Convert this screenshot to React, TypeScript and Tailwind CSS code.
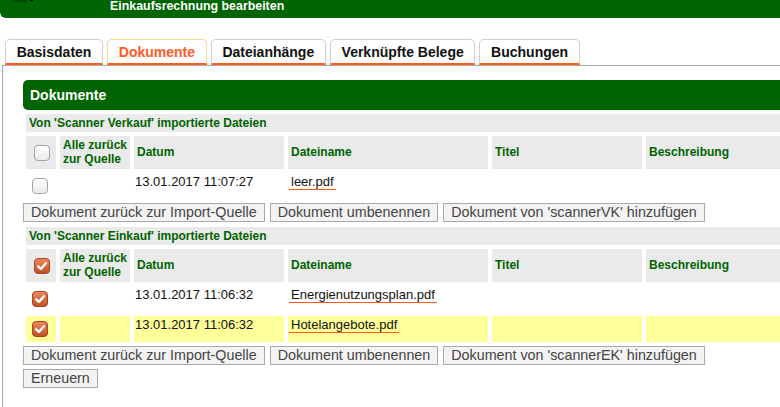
import React from 'react';

type Doc = { date: string; name: string; checked: boolean; marked?: boolean };

const tabs = ['Basisdaten', 'Dokumente', 'Dateianhänge', 'Verknüpfte Belege', 'Buchungen'];

function CheckBox({ checked }: { checked: boolean }) {
  if (checked) {
    return (
      <svg width="16" height="16" viewBox="0 0 16 16" className="block">
        <defs>
          <linearGradient id="cbOn" x1="0" y1="0" x2="0" y2="1">
            <stop offset="0" stopColor="#ec8b5e" />
            <stop offset="1" stopColor="#c24e28" />
          </linearGradient>
        </defs>
        <rect x="0.5" y="0.5" width="15" height="15" rx="3.5" fill="url(#cbOn)" stroke="#a6461f" />
        <path d="M4.2 8.3 L6.9 10.9 L11.9 5.3" fill="none" stroke="#fff" strokeWidth="2.3" strokeLinecap="round" strokeLinejoin="round" />
      </svg>
    );
  }
  return <div className="w-4 h-4 rounded-[4px] border border-[#a3a3a3] bg-linear-to-b from-white to-[#ebebeb]" />;
}

function Btn({ label }: { label: string }) {
  return (
    <button className="h-[19px] px-[7px] border border-[#a9a9a9] bg-[#f3f3f3] text-[#444] text-[14.3px] leading-[17px] whitespace-nowrap">
      {label}
    </button>
  );
}

function DocTable({ title, allChecked, docs }: { title: string; allChecked: boolean; docs: Doc[] }) {
  const th = 'bg-[#eaeaea] text-[#006400] font-bold text-[12px] leading-[13.5px] pl-[3px] text-left align-middle';
  return (
    <table className="table-fixed border-separate border-spacing-[4px] w-[782px] -ml-px">
      <colgroup>
        <col className="w-[30px]" />
        <col className="w-[70px]" />
        <col className="w-[150px]" />
        <col className="w-[200px]" />
        <col className="w-[150px]" />
        <col className="w-[154px]" />
      </colgroup>
      <tbody>
        <tr>
          <td colSpan={6} className="h-[18px] p-0 pl-[3px] bg-[#eaeaea] text-[12px] leading-[14px] font-bold text-[#006400]">
            {title}
          </td>
        </tr>
        <tr>
          <td className="h-[33px] bg-[#eaeaea] pl-[8px] align-middle">
            <CheckBox checked={allChecked} />
          </td>
          <td className={th}>Alle zurück<br />zur Quelle</td>
          <td className={th}>Datum</td>
          <td className={th}>Dateiname</td>
          <td className={th}>Titel</td>
          <td className={th}>Beschreibung</td>
        </tr>
        {docs.map(d => {
          const bg = d.marked ? 'bg-[#ffff99]' : '';
          const td = `${bg} align-top pt-[2px] text-[13px] leading-[14px] text-[#111]`;
          return (
            <tr key={d.name}>
              <td className={`${bg} h-[26px] pl-[6px] align-middle`}>
                <CheckBox checked={d.checked} />
              </td>
              <td className={td}></td>
              <td className={`${td} pl-px`}>{d.date}</td>
              <td className={td}>
                <span className="inline-block ml-px pl-[2px] pr-[2px] border-b border-[#ff5a1f]">{d.name}</span>
              </td>
              <td className={td}></td>
              <td className={td}></td>
            </tr>
          );
        })}
      </tbody>
    </table>
  );
}

export default function App() {
  return (
    <div className="w-[780px] h-[407px] overflow-hidden bg-white font-['Liberation_Sans',Arial,sans-serif]">
      {/* Kopfzeile, oben abgeschnitten */}
      <div className="h-[18px] bg-[#006400] rounded-bl-[6px] flex">
        <span className="ml-[13px] w-[14px] h-[2px] bg-[#004a00]" />
        <span className="ml-[3px] w-[3px] h-px bg-black" />
        <span className="ml-[77px] text-white font-bold text-[12.4px] leading-[13px]">Einkaufsrechnung bearbeiten</span>
      </div>

      {/* Reiter */}
      <div className="flex gap-[4px] pl-[5px] mt-[21px]">
        {tabs.map(t => (
          <div
            key={t}
            className={
              'border-t border-x rounded-t-[5px] px-[10.7px] pt-[4px] pb-[3px] border-b-2 border-b-[#ff5a1f] bg-white text-[14px] leading-[16px] font-bold ' +
              (t === 'Dokumente' ? 'border-t-[#f2d98e] border-x-[#f2d98e] text-[#ff5a1f]' : 'border-t-[#cfcfcf] border-x-[#cfcfcf] text-[#111]')
            }
          >
            {t}
          </div>
        ))}
      </div>

      <div className="ml-[2px] border-l border-t border-[#aaa] pl-[20px] pt-[14px] h-[400px]">
        <div className="h-[30px] w-[800px] bg-[#006400] rounded-l-[5px] flex items-center pl-[7px] text-white font-bold text-[14px]">
          Dokumente
        </div>

        <DocTable
          title="Von 'Scanner Verkauf' importierte Dateien"
          allChecked={false}
          docs={[{ date: '13.01.2017 11:07:27', name: 'leer.pdf', checked: false }]}
        />
        <div className="flex gap-[5px]">
          <Btn label="Dokument zurück zur Import-Quelle" />
          <Btn label="Dokument umbenennen" />
          <Btn label="Dokument von 'scannerVK' hinzufügen" />
        </div>

        <div className="mt-px">
          <DocTable
            title="Von 'Scanner Einkauf' importierte Dateien"
            allChecked={true}
            docs={[
              { date: '13.01.2017 11:06:32', name: 'Energienutzungsplan.pdf', checked: true },
              { date: '13.01.2017 11:06:32', name: 'Hotelangebote.pdf', checked: true, marked: true },
            ]}
          />
        </div>
        <div className="flex gap-[5px]">
          <Btn label="Dokument zurück zur Import-Quelle" />
          <Btn label="Dokument umbenennen" />
          <Btn label="Dokument von 'scannerEK' hinzufügen" />
        </div>
        <div className="mt-px">
          <Btn label="Erneuern" />
        </div>
      </div>
    </div>
  );
}
